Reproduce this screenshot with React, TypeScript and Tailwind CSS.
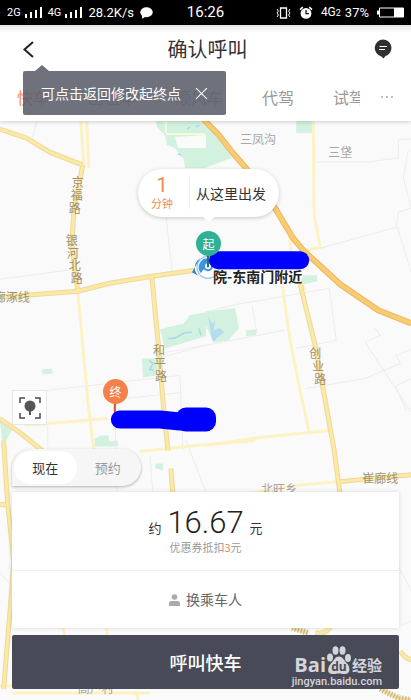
import { useState } from "react";
import clsx from "clsx";

const TABS = ["快车", "出租车", "顺风车", "代驾", "试驾"];
const SIGNAL = ["h-1", "h-[6px]", "h-2", "h-[11px]"];

function Signal({ label }: { label: string }) {
  return (
    <span className="flex items-end gap-1">
      <span className="text-[11px] leading-[11px]">{label}</span>
      <span className="flex items-end gap-[3px]">
        {SIGNAL.map((h) => (
          <i key={h} className={clsx("w-[2px] bg-white", h)} />
        ))}
      </span>
    </span>
  );
}

function StatusBar() {
  return (
    <div className="grid h-[25px] grid-cols-[1fr_auto_1fr] items-center bg-black px-[7px] font-['Roboto','Noto_Sans_CJK_SC',sans-serif] text-white">
      <div className="flex items-center gap-[6px]">
        <Signal label="2G" />
        <Signal label="4G" />
        <span className="text-[13px]">28.2K/s</span>
        <svg viewBox="0 0 13 12" className="h-3 w-[13px] fill-white" aria-hidden="true">
          <ellipse cx="6.5" cy="5.2" rx="6.2" ry="5" />
          <path d="M2 8v3.8L6 9.5z" />
        </svg>
      </div>
      <span className="text-[15px]">16:26</span>
      <div className="flex items-center justify-end gap-1">
        <svg viewBox="0 0 15 12" className="h-3 w-[15px] fill-none stroke-white" aria-hidden="true">
          <path d="M4.5 1h6v10h-6z" strokeWidth="1.3" />
          <path d="M1 2l1.400 2L1 6l1.400 2L1 10M14 2l-1.400 2L14 6l-1.400 2L14 10" />
        </svg>
        <svg viewBox="0 0 14 14" className="ml-1 h-[14px] w-[14px]" aria-hidden="true">
          <circle cx="7" cy="7.4" r="5.400" fill="white" />
          <path d="M1 3.6L3.8 1.2M13 3.6L10.2 1.2" stroke="white" strokeWidth="1.6" />
          <path d="M7 4v3.6h2.8" fill="none" stroke="black" strokeWidth="1.2" />
        </svg>
        <span className="ml-1 text-[12px] leading-3">
          4G<span className="text-[9px]">2</span>
        </span>
        <span className="text-[13px]">37%</span>
        <svg viewBox="0 0 27 11" className="ml-1 h-[11px] w-[27px]" aria-hidden="true">
          <path d="M2.5 1h24v9h-24z" fill="none" stroke="white" />
          <path d="M0 3.5h2v4H0zM17 1h9.500v9H17z" fill="white" />
        </svg>
      </div>
    </div>
  );
}

function Tip({ onClose }: { onClose: () => void }) {
  return (
    <div className="absolute top-10 left-[23px] z-20">
      <div className="ml-3 h-0 w-0 border-x-[7px] border-b-[6px] border-x-transparent border-b-[#5f626f]/90" />
      <div className="flex h-11 items-center gap-[14px] rounded-[2px] bg-[#5f626f]/90 px-[18px] text-white">
        <span className="text-[14px] whitespace-nowrap">可点击返回修改起终点</span>
        <button type="button" onClick={onClose} aria-label="关闭">
          <svg viewBox="0 0 12 12" className="size-[13px] stroke-white" aria-hidden="true">
            <path d="M1 1l10 10M11 1L1 11" />
          </svg>
        </button>
      </div>
    </div>
  );
}

function Header() {
  const [tip, setTip] = useState(true);
  const [tab, setTab] = useState(TABS[0]);

  return (
    <header className="relative z-10 bg-white shadow-[0_1px_4px_rgba(0,0,0,0.18)]">
      <div className="grid h-12 grid-cols-[1fr_auto_1fr] items-center bg-linear-to-b from-[#e4e4e4] to-white to-15% pr-[19px] pl-[23px]">
        <button type="button" aria-label="返回" className="justify-self-start">
          <svg viewBox="0 0 11 17" className="h-[17px] w-[11px] fill-none stroke-[#222]" aria-hidden="true">
            <path d="M10 1L1.500 8.500L10 16" strokeWidth="2" />
          </svg>
        </button>
        <h1 className="text-[20px] text-[#333]">确认呼叫</h1>
        <button type="button" aria-label="消息" className="justify-self-end">
          <svg viewBox="0 0 18 20" className="h-5 w-[18px]" aria-hidden="true">
            <path d="M9 .5a8.500 8.500 0 0 1 2.500 16.600L9.600 19.500L7 17.200A8.500 8.500 0 0 1 9 .5z" fill="#303033" />
            <path d="M5.500 7.500h7.500M5 10.500h6" stroke="white" strokeWidth="1.200" />
          </svg>
        </button>
      </div>
      <nav className="flex h-12 items-center pr-[18px] pl-[17px]">
        <div className="flex min-w-0 flex-1 gap-[39px] overflow-hidden">
          {TABS.map((t) => (
            <button
              key={t}
              type="button"
              onClick={() => setTab(t)}
              className={clsx("shrink-0 text-[16px]", t === tab ? "text-[#f58c4f]" : "text-[#999]")}
            >
              {t}
            </button>
          ))}
        </div>
        <button type="button" aria-label="更多" className="ml-[21px] flex gap-[3px]">
          <i className="size-[2px] rounded-full bg-[#aaa]" />
          <i className="size-[2px] rounded-full bg-[#aaa]" />
          <i className="size-[2px] rounded-full bg-[#aaa]" />
        </button>
      </nav>
      {tip && <Tip onClose={() => setTip(false)} />}
    </header>
  );
}

const PARKS = [
  "M156 121H200L218 138L232 158L226 160L205 168H185L184 160L175 148L167 145L165 135L157 127z",
  "M296 121h16v12h-16z",
  "M303 275h14v6l-18 4z",
  "M160 329L184 323L190 315L206 312V336L165 348z",
  "M206 311L235 308L239 328L228 340L213 342L206 325z",
  "M246 330l10-1v6l-10 1z",
  "M142 358h15v17l-14 2z",
  "M42 369l10-1l1 5l-10 1z",
  "M95 438l6-3h8v6l9-1v6H95z",
  "M0 420l12 10l-7 13H3z",
  "M156 463h7v7l-8-3z",
];

const LANES = [
  "M37 121L33 138", "M0 279L68 270", "M166 215L172 270",
  "M313 162H368L398 158V140L411 139", "M411 208L398 212L396 227L320 248",
  "M408 150L403 178L411 208", "M397 227L411 272", "M205 312L232 305L329 288L336 340L295 348",
  "M165 352L205 345L284 330", "M252 305L256 328L257 333", "M305 388L365 378L400 363L396 355L411 349",
  "M375 328L380 335L365 342L390 380L411 412", "M411 378L395 386L406 410",
  "M46 390L180 375", "M48 425V445", "M125 398L182 392", "M157 358L206 345", "M180 375L183 450",
  "M115 400L117 490", "M150 455L153 492", "M186 440L206 492", "M395 560L411 590", "M0 572L12 584", "M400 625L411 620",
];

const MINOR = [
  "M81 121L84 165", "M87 121L89 168", "M313 121L314 215L320 247L304 250", "M78 291L88 400L94 450",
  "M289 232L292 262", "M282 284L290 340L300 390L309 432", "M205 445L260 437L329 430",
  "M25 425L108 418", "M140 451L206 444L255 440", "M248 493L295 485L338 481", "M300 281L305 290",
  "M0 685H150", "M12 692L150 692", "M63 626L65 634", "M106 626L108 634", "M135 690L139 700",
];

const ROADS = [
  "M0 129L27 138L50 152L83 165", "M83 165L74 212L72 245L78 291", "M0 297L78 291L110 283L152 276L195 270",
  "M152 277L158 340L163 400L168 450", "M171 468L173 495", "M300 284L315 345L325 400L334 450L340 495",
  "M340 481L411 474", "M0 418L20 432L45 452", "M4 440L8 503L14 560L12 590L4 688", "M0 504H10",
  "M400 650Q404 657 411 659", "M315 632Q325 634 330 626",
];

const HIGHWAY = "M203 119L218 134L232 152L246 168L275 208L293 238L303 250L340 284L378 310L411 323";

const LABELS = [
  { text: "三凤沟", x: 240, y: 144, color: "#a5a5a5" },
  { text: "三垡", x: 328, y: 157, color: "#a5a5a5" },
  { text: "廊涿线", x: -6, y: 302, color: "#a3906c" },
  { text: "北旺乡", x: 261, y: 493, color: "#a5a5a5" },
  { text: "崔廊线", x: 362, y: 482, color: "#a3906c" },
  { text: "高户村", x: 78, y: 692, color: "#a5a5a5" },
];

// names written down a road, one [x, y] per character
const ROAD_NAMES = [
  { text: "京福路", at: [[78, 187], [77, 200], [75, 213]] },
  { text: "银河北路", at: [[72, 245], [73, 258], [75, 270], [77, 283]] },
  { text: "和平路", at: [[159, 355], [160, 368], [161, 381]] },
  { text: "创业路", at: [[315, 358], [318, 371], [320, 384]] },
];

function MapCanvas() {
  return (
    <svg
      viewBox="0 121 411 579"
      preserveAspectRatio="xMidYMin slice"
      className="absolute inset-0 h-full w-full bg-[#fafafa] font-['Noto_Sans_CJK_SC',sans-serif] text-[12px]"
      aria-hidden="true"
    >
      <g fill="#d3f1df">
        {PARKS.map((d) => <path key={d} d={d} />)}
      </g>
      <path d="M175 137L206 135V148H178z" fill="#fafafa" />
      <path d="M166 133V121M166 134H205" fill="none" stroke="#f6fbdc" strokeWidth="2" />
      <path
        d="M168 338q7 1 12-3t12-3M199 328l2 7M187 129l3-2M196 127l3-2M178 154l3 1M149 360l4 3l-3 6l4 1"
        fill="none"
        stroke="#acd6f0"
        strokeWidth="1.500"
      />
      <path d="M208 315l4 9l3-4l-1 10l6-2l4 4l-5 4l-6 5l-2-8z" fill="#b5dcf0" />
      <g fill="none" stroke="#ececee">
        {LANES.map((d) => <path key={d} d={d} />)}
      </g>
      <g fill="none" stroke="#fdf2c4" strokeWidth="3">
        {MINOR.map((d) => <path key={d} d={d} />)}
      </g>
      <g fill="none" stroke="#ecd99c" strokeWidth="5" strokeLinejoin="round">
        {ROADS.map((d) => <path key={d} d={d} />)}
      </g>
      <g fill="none" stroke="#fce9a4" strokeWidth="3" strokeLinejoin="round">
        {ROADS.map((d) => <path key={d} d={d} />)}
      </g>
      <path d={HIGHWAY} fill="none" stroke="#e9b961" strokeWidth="6" />
      <path d={HIGHWAY} fill="none" stroke="#f9cb73" strokeWidth="4" />
      <path d="M292 627L308 632M380 688L398 697L411 699" fill="none" stroke="#f3dc9a" strokeWidth="4" />
      <path d="M292 627L308 632M380 688L398 697L411 699" fill="none" stroke="#c4b084" strokeWidth="6" strokeDasharray="1 2" />
      <g>
        {LABELS.map((l) => (
          <text key={l.text} x={l.x} y={l.y} fill={l.color}>{l.text}</text>
        ))}
        {ROAD_NAMES.map((r) =>
          r.at.map(([x, y], i) => (
            <text key={r.text + i} x={x} y={y} textAnchor="middle" fill="#a3906c">{r.text[i]}</text>
          ))
        )}
      </g>
      <circle cx="208" cy="267" r="11" fill="white" stroke="#8fc1ee" />
      <path d="M192 272L200 258A11 11 0 0 0 199 276z" fill="#2d83dc" />
      <path d="M208 258A9 9 0 0 0 201 273Q203 268 208 268z" fill="#3b93e6" />
      <circle cx="208" cy="266" r="4" fill="white" stroke="#3b93e6" strokeWidth="2" />
      <path d="M208 254V267" stroke="#2f6f62" strokeWidth="2" />
      <path d="M115 402V414" stroke="#c9552c" strokeWidth="2" />
      <path d="M218 260H300" stroke="#00f" strokeWidth="18" strokeLinecap="round" />
      <path d="M120 419H160L180 421H196" fill="none" stroke="#00f" strokeWidth="18" strokeLinecap="round" strokeLinejoin="round" />
      <rect x="176" y="407" width="40" height="24" rx="10" fill="#00f" />
    </svg>
  );
}

function Pin({ text, className }: { text: string; className: string }) {
  return (
    <div className={clsx("absolute flex size-[25px] items-center justify-center rounded-full text-[12px] text-white", className)}>
      {text}
    </div>
  );
}

function PickupBubble() {
  return (
    <button
      type="button"
      className="absolute top-12 left-[138px] flex h-12 items-center rounded-full bg-white px-[13px] shadow-[0_1px_4px_rgba(0,0,0,0.2)]"
    >
      <span className="flex flex-col items-center pr-4 text-[#f08a50]">
        <span className="font-['Roboto',sans-serif] text-[20px] leading-5">1</span>
        <span className="text-[11px] leading-4">分钟</span>
      </span>
      <span className="h-8 w-px bg-[#eee]" />
      <span className="pl-[6px] text-[14px] text-[#333]">从这里出发</span>
      <i className="absolute top-full left-1/2 h-0 w-0 -translate-x-1/2 border-x-[6px] border-t-[5px] border-x-transparent border-t-white" />
    </button>
  );
}

function Watermark() {
  return (
    <div className="pointer-events-none absolute right-[17px] bottom-0 flex flex-col items-end text-[#d4d5da]">
      <div className="flex items-end font-['Open_Sans',sans-serif]">
        <span className="text-[20px] leading-5 font-bold">Bai</span>
        <svg viewBox="0 0 26 29" className="h-[29px] w-[26px]" aria-hidden="true">
          <g fill="#d4d5da">
            <ellipse cx="4" cy="11.500" rx="3" ry="4" />
            <ellipse cx="9.500" cy="4.500" rx="3" ry="4.200" />
            <ellipse cx="16.500" cy="4.500" rx="3" ry="4.200" />
            <ellipse cx="22" cy="12" rx="3" ry="4" />
            <path d="M13 10.500c4 0 5 4 8 7s4 10-1.500 10.500c-3 .3-4-.5-6.500-.5s-4 .8-7 .5C.5 27.500 1.500 21 5 17.500s4-7 8-7z" />
          </g>
          <text x="13" y="25" textAnchor="middle" fill="#484a57" className="text-[12px] font-bold">du</text>
        </svg>
        <span className="font-['Noto_Sans_CJK_SC',sans-serif] text-[15px] leading-5 font-bold">经验</span>
      </div>
      <span className="font-['Roboto',sans-serif] text-[11px] leading-[14px] font-medium">jingyan.baidu.com</span>
    </div>
  );
}

function BookingPanel() {
  const [when, setWhen] = useState("现在");

  return (
    <div className="relative flex flex-col px-3 pb-3">
      <button
        type="button"
        aria-label="定位"
        className="mb-6 flex size-[35px] items-center justify-center border border-[#e6e6e6] bg-white"
      >
        <svg viewBox="0 0 22 22" className="size-[22px]" aria-hidden="true">
          <path d="M1 6V1h5M16 1h5v5M21 16v5h-5M6 21H1v-5" fill="none" stroke="#4a4a4a" strokeWidth="1.500" />
          <circle cx="11" cy="9" r="5.500" fill="#555" />
          <path d="M11 13v5" stroke="#555" strokeWidth="2" />
        </svg>
      </button>
      <div className="mb-[6px] flex h-[37px] w-[129px] items-center rounded-full rounded-bl-sm bg-[#f6f6f6] p-[2px] shadow-[0_1px_3px_rgba(0,0,0,0.3)]">
        {["现在", "预约"].map((t) => (
          <button
            key={t}
            type="button"
            aria-pressed={t === when}
            onClick={() => setWhen(t)}
            className={clsx("h-[33px] flex-1 rounded-full text-[13px]", t === when ? "bg-white text-[#333]" : "text-[#999]")}
          >
            {t}
          </button>
        ))}
      </div>
      <section className="rounded-[2px] bg-white shadow-[0_0_4px_rgba(0,0,0,0.15)]">
        <div className="flex h-[79px] flex-col items-center justify-center border-b border-[#efefef]">
          <p className="flex items-baseline gap-[6px] text-[13px] text-[#333]">
            约
            <strong className="font-['Roboto',sans-serif] text-[31px] leading-8 font-light text-[#222]">16.67</strong>
            元
          </p>
          <p className="text-[11px] leading-4 text-[#999]">
            优惠券抵扣<span className="text-[#f08a50]">3</span>元
          </p>
        </div>
        <button type="button" className="flex h-[57px] w-full items-center justify-center gap-[6px] text-[14px] text-[#666]">
          <svg viewBox="0 0 11 12" className="h-3 w-[11px] fill-[#aaa]" aria-hidden="true">
            <circle cx="5.500" cy="3" r="2.800" />
            <path d="M0 12V9.500Q0 7 2.500 7h6Q11 7 11 9.500V12z" />
          </svg>
          换乘车人
        </button>
      </section>
      <button type="button" className="relative mt-[7px] h-[54px] rounded-[2px] bg-[#484a57] text-[18px] font-medium text-white">
        呼叫快车
        <Watermark />
      </button>
    </div>
  );
}

export default function App() {
  return (
    <div className="flex min-h-screen flex-col bg-[#fafafa] font-['Noto_Sans_CJK_SC',sans-serif]">
      <StatusBar />
      <Header />
      <main className="relative flex flex-1 flex-col justify-end overflow-hidden pt-[269px]">
        <MapCanvas />
        <PickupBubble />
        <Pin text="起" className="top-[110px] left-[196px] bg-[#2fb195]" />
        <span className="absolute top-[145px] left-[213px] text-[14px] leading-5 font-bold text-[#222]">院-东南门附近</span>
        <Pin text="终" className="top-[258px] left-[103px] bg-[#f58049]" />
        <BookingPanel />
      </main>
    </div>
  );
}
